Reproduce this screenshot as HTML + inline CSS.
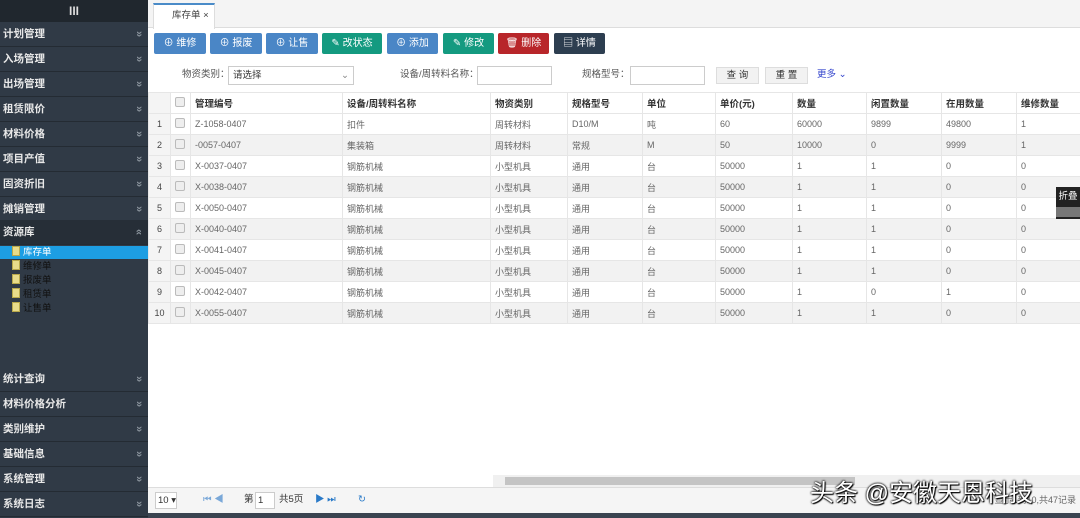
<!DOCTYPE html><html><head><meta charset="utf-8"><style>
*{margin:0;padding:0;box-sizing:border-box}
body{width:1080px;height:518px;overflow:hidden;font-family:"Liberation Sans","Noto Sans CJK SC",sans-serif;font-size:10px;color:#333;background:#fff;position:relative}
.sb{position:absolute;left:0;top:0;width:148px;height:518px;background:#303a46}
.top{height:22px;background:#20272e;color:#ddd;text-align:center;font-size:12px;line-height:22px;font-weight:bold}
.mi{position:absolute;left:0;width:148px;height:25px;border-bottom:1px solid #242b33;color:#e8e8e8;font-weight:bold;font-size:10.5px;line-height:24px;padding-left:3px}
.mi:after{content:"»";position:absolute;right:6px;top:0;transform:rotate(90deg);color:#8a939c;font-size:11px}
.mi.up:after{transform:rotate(-90deg)}
.sub{position:absolute;left:12px;color:#111;font-size:9.5px;height:13px;line-height:13px}
.sub i{display:inline-block;width:8px;height:10px;background:#e8dc8a;border:1px solid #b9a94b;vertical-align:-1px;margin-right:3px}
.main{position:absolute;left:148px;top:0;right:0;bottom:0}
.tabs{height:28px;background:#f4f4f4;border-bottom:1px solid #ddd}
.tab{position:absolute;left:5px;top:3px;width:62px;height:26px;background:#fff;border:1px solid #ddd;border-bottom:none;border-top:2px solid #4a8bc8;font-size:9.5px;line-height:22px;padding-left:18px;color:#444}
.btn{position:absolute;top:33px;height:21px;color:#fff;font-size:10px;line-height:21px;text-align:center;border-radius:2px}
.b{background:#4a86c6}.g{background:#149a80}.r{background:#b8262a}.d{background:#2d3e50}
.f{position:absolute;top:66px;font-size:9.5px;color:#555;line-height:18px}
.in{position:absolute;top:66px;height:19px;border:1px solid #ccc;background:#fff}
.q{position:absolute;top:67px;height:17px;background:#f2f2f2;border:1px solid #ddd;font-size:9.5px;line-height:15px;text-align:center}
table{position:absolute;left:0;top:92px;border-collapse:collapse;width:932px;table-layout:fixed}
td{height:21px;border:1px solid #e6e6e6;padding-left:4px;font-size:9px;color:#666;white-space:nowrap;overflow:hidden}
tr.h td{color:#333;font-weight:bold;font-size:9.5px;background:#fff}
tr:nth-child(odd):not(.h) td{background:#f2f2f2}
td.n{text-align:center;padding:0;color:#444;background:#f4f4f4!important}
.cb{display:inline-block;width:10px;height:10px;border:1px solid #bbb;background:#eee;border-radius:2px}
</style></head><body>
<div class="sb"><div class="top">III</div>
<div class="mi" style="top:22px">计划管理</div>
<div class="mi" style="top:47px">入场管理</div>
<div class="mi" style="top:72px">出场管理</div>
<div class="mi" style="top:97px">租赁限价</div>
<div class="mi" style="top:122px">材料价格</div>
<div class="mi" style="top:147px">项目产值</div>
<div class="mi" style="top:172px">固资折旧</div>
<div class="mi" style="top:197px">摊销管理</div>
<div class="mi up" style="top:220px;background:#262e37">资源库</div>
<div style="position:absolute;left:0;top:246px;width:148px;height:13px;background:#1d9ee3"></div>
<div class="sub" style="top:246px;color:#fff"><i></i>库存单</div>
<div class="sub" style="top:260px"><i></i>维修单</div>
<div class="sub" style="top:274px"><i></i>报废单</div>
<div class="sub" style="top:288px"><i></i>租赁单</div>
<div class="sub" style="top:302px"><i></i>让售单</div>
<div class="mi" style="top:367px">统计查询</div>
<div class="mi" style="top:392px">材料价格分析</div>
<div class="mi" style="top:417px">类别维护</div>
<div class="mi" style="top:442px">基础信息</div>
<div class="mi" style="top:467px">系统管理</div>
<div class="mi" style="top:492px">系统日志</div>
</div>
<div class="main">
<div class="tabs"><div class="tab">库存单 ×</div></div>
<div class="btn b" style="left:6px;width:52px">⊕ 维修</div>
<div class="btn b" style="left:62px;width:52px">⊕ 报废</div>
<div class="btn b" style="left:118px;width:52px">⊕ 让售</div>
<div class="btn g" style="left:174px;width:60px">✎ 改状态</div>
<div class="btn b" style="left:239px;width:51px">⊕ 添加</div>
<div class="btn g" style="left:295px;width:51px">✎ 修改</div>
<div class="btn r" style="left:350px;width:51px">🗑 删除</div>
<div class="btn d" style="left:406px;width:51px">▤ 详情</div>
<div class="f" style="left:34px">物资类别：</div>
<div class="in" style="left:80px;width:126px;font-size:9.5px;line-height:17px;padding-left:4px;color:#333">请选择<span style="position:absolute;right:4px;color:#888">⌄</span></div>
<div class="f" style="left:252px">设备/周转料名称：</div>
<div class="in" style="left:329px;width:75px"></div>
<div class="f" style="left:434px">规格型号：</div>
<div class="in" style="left:482px;width:75px"></div>
<div class="q" style="left:568px;width:43px">查 询</div>
<div class="q" style="left:617px;width:43px">重 置</div>
<div class="f" style="left:669px;color:#3344cc">更多 ⌄</div>
<table>
<colgroup><col style="width:22px"><col style="width:20px"><col style="width:152px"><col style="width:148px"><col style="width:77px"><col style="width:75px"><col style="width:73px"><col style="width:77px"><col style="width:74px"><col style="width:75px"><col style="width:75px"><col style="width:64px"></colgroup>
<tr class="h"><td class="n"></td><td><span class="cb"></span></td><td>管理编号</td><td>设备/周转料名称</td><td>物资类别</td><td>规格型号</td><td>单位</td><td>单价(元)</td><td>数量</td><td>闲置数量</td><td>在用数量</td><td>维修数量</td></tr>
<tr><td class="n">1</td><td><span class="cb"></span></td><td>Z-1058-0407</td><td>扣件</td><td>周转材料</td><td>D10/M</td><td>吨</td><td>60</td><td>60000</td><td>9899</td><td>49800</td><td>1</td></tr>
<tr><td class="n">2</td><td><span class="cb"></span></td><td>-0057-0407</td><td>集装箱</td><td>周转材料</td><td>常规</td><td>M</td><td>50</td><td>10000</td><td>0</td><td>9999</td><td>1</td></tr>
<tr><td class="n">3</td><td><span class="cb"></span></td><td>X-0037-0407</td><td>钢筋机械</td><td>小型机具</td><td>通用</td><td>台</td><td>50000</td><td>1</td><td>1</td><td>0</td><td>0</td></tr>
<tr><td class="n">4</td><td><span class="cb"></span></td><td>X-0038-0407</td><td>钢筋机械</td><td>小型机具</td><td>通用</td><td>台</td><td>50000</td><td>1</td><td>1</td><td>0</td><td>0</td></tr>
<tr><td class="n">5</td><td><span class="cb"></span></td><td>X-0050-0407</td><td>钢筋机械</td><td>小型机具</td><td>通用</td><td>台</td><td>50000</td><td>1</td><td>1</td><td>0</td><td>0</td></tr>
<tr><td class="n">6</td><td><span class="cb"></span></td><td>X-0040-0407</td><td>钢筋机械</td><td>小型机具</td><td>通用</td><td>台</td><td>50000</td><td>1</td><td>1</td><td>0</td><td>0</td></tr>
<tr><td class="n">7</td><td><span class="cb"></span></td><td>X-0041-0407</td><td>钢筋机械</td><td>小型机具</td><td>通用</td><td>台</td><td>50000</td><td>1</td><td>1</td><td>0</td><td>0</td></tr>
<tr><td class="n">8</td><td><span class="cb"></span></td><td>X-0045-0407</td><td>钢筋机械</td><td>小型机具</td><td>通用</td><td>台</td><td>50000</td><td>1</td><td>1</td><td>0</td><td>0</td></tr>
<tr><td class="n">9</td><td><span class="cb"></span></td><td>X-0042-0407</td><td>钢筋机械</td><td>小型机具</td><td>通用</td><td>台</td><td>50000</td><td>1</td><td>0</td><td>1</td><td>0</td></tr>
<tr><td class="n">10</td><td><span class="cb"></span></td><td>X-0055-0407</td><td>钢筋机械</td><td>小型机具</td><td>通用</td><td>台</td><td>50000</td><td>1</td><td>1</td><td>0</td><td>0</td></tr>
</table>
<div style="position:absolute;left:908px;top:187px;width:24px;height:32px;background:#222;color:#fff;font-size:9.5px;text-align:center;line-height:20px">折叠<div style="height:10px;background:#777"></div></div>
<div style="position:absolute;left:345px;top:475px;right:0;height:12px;background:#f0f0f0"><div style="position:absolute;left:12px;top:2px;width:350px;height:8px;background:#c4c4c4"></div></div>
<div style="position:absolute;left:0;top:487px;right:0;height:26px;background:#f5f5f5;border-top:1px solid #ddd;font-size:9.5px;line-height:24px;color:#333">
<span style="position:absolute;left:7px;top:4px;width:22px;height:17px;border:1px solid #ccc;background:#fff;line-height:15px;padding-left:2px">10 ▾</span>
<span style="position:absolute;left:55px;color:#7aa8d8">⏮ ◀</span>
<span style="position:absolute;left:96px">第</span><span style="position:absolute;left:107px;top:4px;width:20px;height:17px;border:1px solid #ccc;background:#fff;line-height:15px;padding-left:2px">1</span>
<span style="position:absolute;left:131px">共5页</span>
<span style="position:absolute;left:167px;color:#2a7ac8">▶ ⏭</span>
<span style="position:absolute;left:210px;color:#2a7ac8">↻</span>
<span style="position:absolute;right:4px;color:#666;font-size:9px">显示1到10,共47记录</span>
<span style="position:absolute;left:662px;top:-6px;font-size:24px;color:#fff;text-shadow:0 0 2px #000,0 0 2px #000,1px 1px 1px #000">头条 @安徽天恩科技</span>
</div>
<div style="position:absolute;left:0;top:513px;right:0;height:5px;background:#3a4450"></div>
</div>
</body></html>
